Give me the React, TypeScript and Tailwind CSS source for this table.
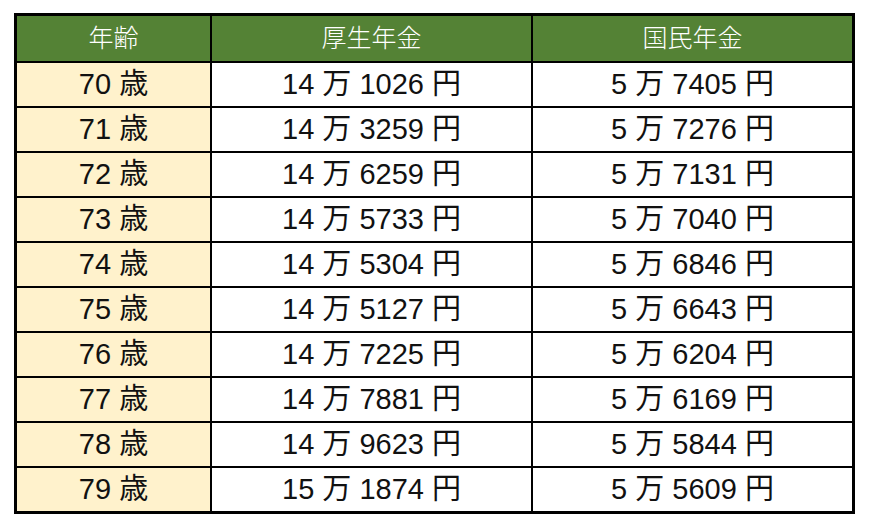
import * as React from 'react'

const rows = [
  { age: '70', kosei: ['14', '1026'], kokumin: ['5', '7405'] },
  { age: '71', kosei: ['14', '3259'], kokumin: ['5', '7276'] },
  { age: '72', kosei: ['14', '6259'], kokumin: ['5', '7131'] },
  { age: '73', kosei: ['14', '5733'], kokumin: ['5', '7040'] },
  { age: '74', kosei: ['14', '5304'], kokumin: ['5', '6846'] },
  { age: '75', kosei: ['14', '5127'], kokumin: ['5', '6643'] },
  { age: '76', kosei: ['14', '7225'], kokumin: ['5', '6204'] },
  { age: '77', kosei: ['14', '7881'], kokumin: ['5', '6169'] },
  { age: '78', kosei: ['14', '9623'], kokumin: ['5', '5844'] },
  { age: '79', kosei: ['15', '1874'], kokumin: ['5', '5609'] },
]

const font = "font-['Liberation_Sans','Noto_Sans_CJK_JP',sans-serif]"

function Cell({ children, className = '' }: { children: React.ReactNode; className?: string }) {
  return (
    <div className={`flex items-center justify-center text-[29px] leading-none text-[#111] ${className}`}>
      {children}
    </div>
  )
}

export default function App() {
  return (
    <div className={`h-[524px] w-[870px] bg-white pl-[14px] pt-[13px] ${font}`}>
      <div className="grid w-[841px] grid-cols-[193px_319px_319px] grid-rows-[45px_repeat(10,43px)] gap-[2px] border-[3px] border-black bg-black">
        {['年齢', '厚生年金', '国民年金'].map((h) => (
          <div
            key={h}
            className="flex items-center justify-center bg-[#548235] text-[25px] font-light leading-none text-white"
          >
            {h}
          </div>
        ))}
        {rows.map((r) => (
          <React.Fragment key={r.age}>
            <Cell className="bg-[#fff2cc]">{r.age} 歳</Cell>
            <Cell className="bg-white">
              {r.kosei[0]} 万 {r.kosei[1]} 円
            </Cell>
            <Cell className="bg-white">
              {r.kokumin[0]} 万 {r.kokumin[1]} 円
            </Cell>
          </React.Fragment>
        ))}
      </div>
    </div>
  )
}
